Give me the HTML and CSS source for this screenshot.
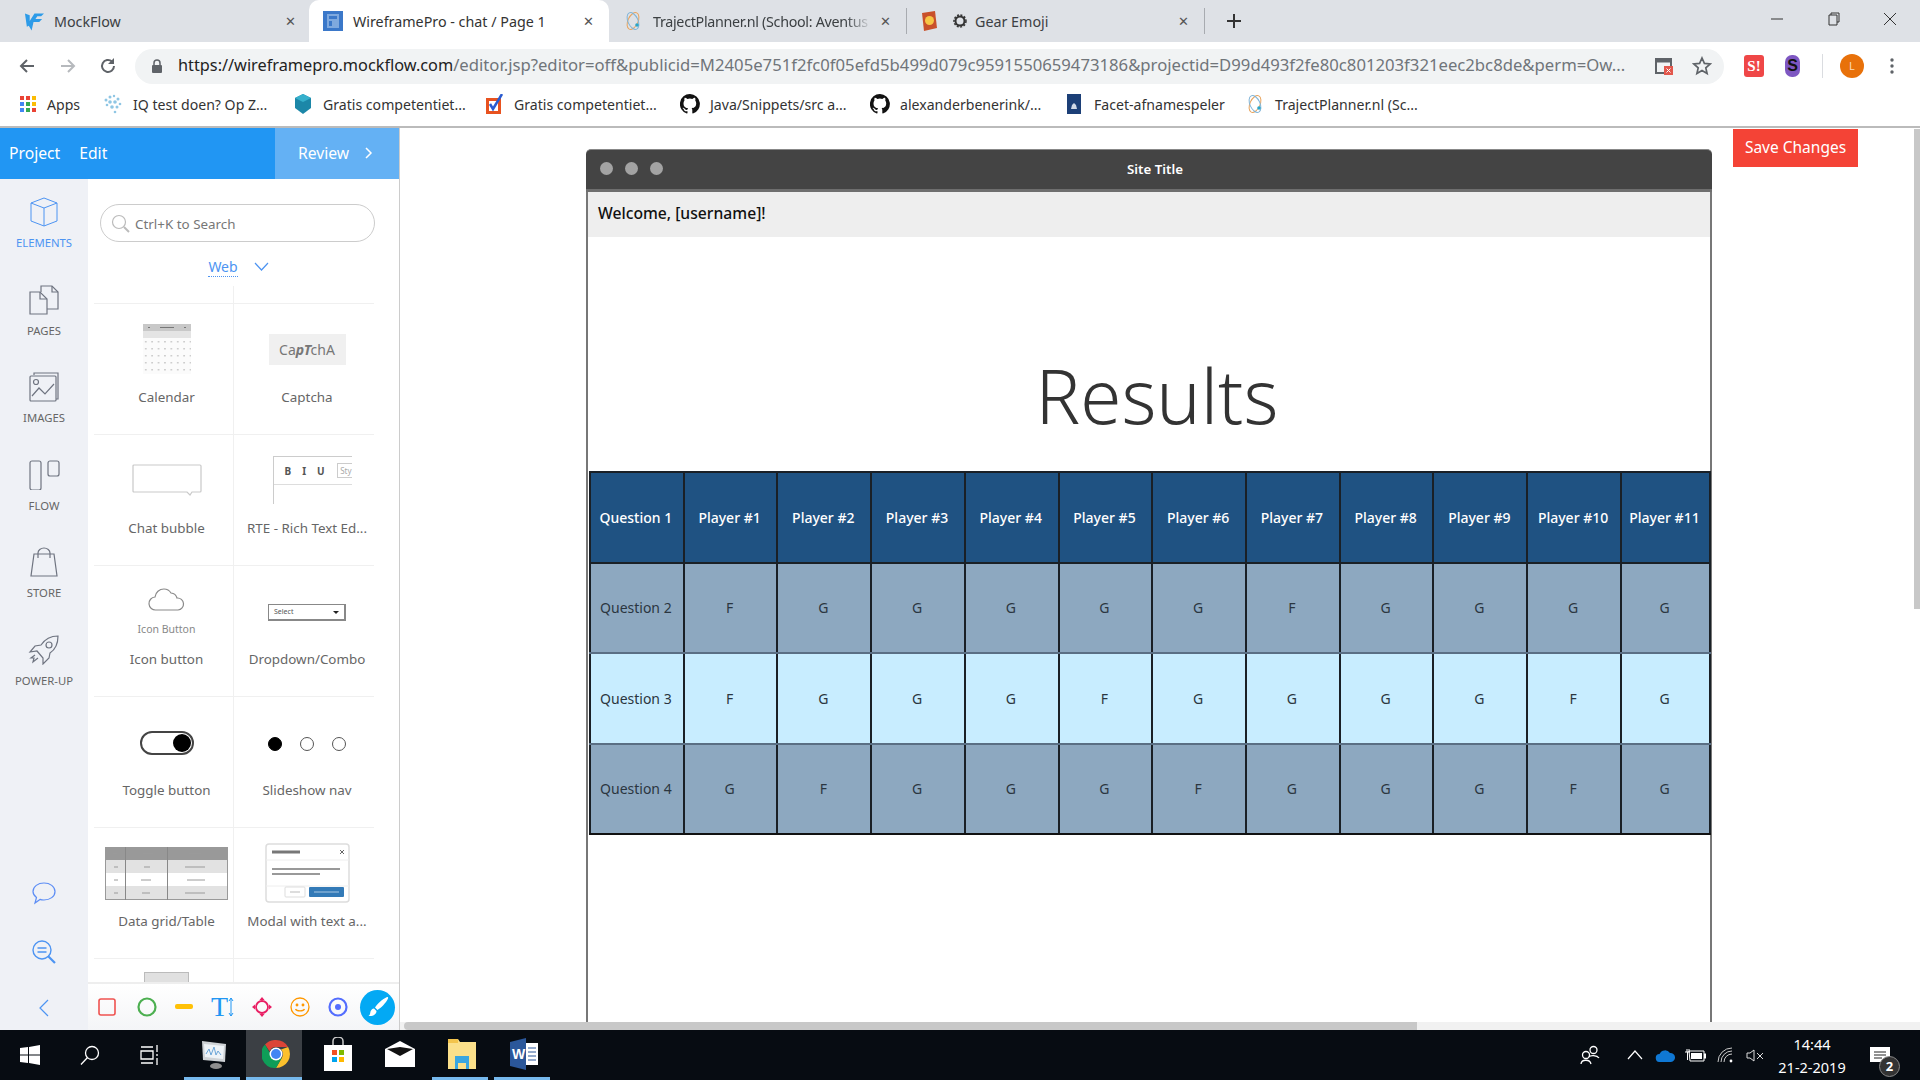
FILE: index.html
```html
<!DOCTYPE html>
<html lang="en">
<head>
  <meta charset="UTF-8">
  <title>WireframePro - chat / Page 1</title>
  <link rel="stylesheet" href="styles.css">
</head>
<body>

<svg class="defs" width="0" height="0">
  <symbol id="github" viewBox="0 0 20 20">
    <path fill="#111" d="M10 0a10 10 0 0 0-3.2 19.5c.5.1.7-.2.7-.5v-1.8c-2.8.6-3.4-1.3-3.4-1.3-.5-1.2-1.1-1.5-1.1-1.5-.9-.6.1-.6.1-.6 1 .1 1.5 1 1.5 1 .9 1.5 2.3 1.1 2.9.8.1-.6.3-1.100.6-1.300-2.200-.3-4.600-1.100-4.600-5 0-1.100.4-2 1-2.700-.1-.3-.4-1.300.1-2.700 0 0 .8-.3 2.800 1a9.600 9.600 0 0 1 5 0c1.900-1.300 2.700-1 2.700-1 .6 1.400.2 2.400.1 2.700.6.700 1 1.600 1 2.700 0 3.900-2.300 4.700-4.600 5 .4.300.7.900.7 1.900V19c0 .3.200.6.700.5A10 10 0 0 0 10 0z"/>
  </symbol>
  <symbol id="orbit" viewBox="0 0 20 20">
    <ellipse cx="10" cy="10" rx="5" ry="9" fill="none" stroke="#e8a35c" stroke-width="1" transform="rotate(25 10 10)"/>
    <ellipse cx="10" cy="10" rx="5" ry="9" fill="none" stroke="#7fb4d8" stroke-width="1" transform="rotate(-25 10 10)"/>
    <circle cx="14" cy="14" r="1.800" fill="#2aa6c9"/>
  </symbol>
</svg>

<!-- Browser tabs -->
<div class="tabbar">
  <div class="tab tab-first">
    <svg class="tab-icon" viewBox="0 0 21 20"><path fill="#2d9be8" d="M1 2l5 2v6l5-8h10l-3 3h-4l-2 3h7l-3 3h-6l-2 9-3-5-2 1z"/></svg>
    <span class="tab-title">MockFlow</span>
    <span class="tab-close">&#10005;</span>
  </div>
  <div class="tab tab-active">
    <svg class="tab-icon" viewBox="0 0 20 20"><rect width="20" height="20" fill="#3b78c9"/><rect x="4" y="3" width="12" height="14" fill="#7fa9de"/><rect x="6" y="5" width="8" height="3" fill="#3b78c9"/><rect x="6" y="10" width="3" height="5" fill="#3b78c9"/></svg>
    <span class="tab-title">WireframePro - chat / Page 1</span>
    <span class="tab-close">&#10005;</span>
  </div>
  <div class="tab tab-sep">
    <svg class="tab-icon"><use href="#orbit"/></svg>
    <span class="tab-title tab-fade">TrajectPlanner.nl (School: Aventus</span>
    <span class="tab-close">&#10005;</span>
  </div>
  <div class="tab tab-sep">
    <svg class="tab-icon tab-icon-book" viewBox="0 0 16 20"><path fill="#c9502a" d="M1 2l13-2 2 17-13 3z"/><circle cx="8.500" cy="9.500" r="4.500" fill="#f7c545"/></svg>
    <svg class="tab-icon tab-icon-gear" viewBox="0 0 14 14"><circle cx="7" cy="7" r="4.500" fill="none" stroke="#333" stroke-width="2"/><circle cx="7" cy="7" r="6" fill="none" stroke="#333" stroke-width="1.500" stroke-dasharray="2 1.500"/></svg>
    <span class="tab-title">Gear Emoji</span>
    <span class="tab-close">&#10005;</span>
  </div>
  <div class="tab-new">
    <svg width="16" height="16" viewBox="0 0 16 16"><path d="M8 1v14M1 8h14" stroke="#333" stroke-width="2"/></svg>
  </div>
  <div class="win-controls">
    <svg width="14" height="14" viewBox="0 0 14 14"><path d="M1 7h12" stroke="#333"/></svg>
    <svg width="14" height="14" viewBox="0 0 14 14"><path d="M4 3V1h8v9h-2M2 3h8v10H2z" fill="none" stroke="#333"/></svg>
    <svg width="14" height="14" viewBox="0 0 14 14"><path d="M1 1l12 12M13 1L1 13" stroke="#333"/></svg>
  </div>
</div>

<!-- Address bar -->
<div class="toolbar">
  <div class="nav-buttons">
    <svg width="18" height="18" viewBox="0 0 18 18"><path d="M16 9H3M9 3L3 9l6 6" fill="none" stroke="#5f6368" stroke-width="2"/></svg>
    <svg width="18" height="18" viewBox="0 0 18 18"><path d="M2 9h13M9 3l6 6-6 6" fill="none" stroke="#b6b9bd" stroke-width="2"/></svg>
    <svg width="18" height="18" viewBox="0 0 18 18"><path d="M15 9a6 6 0 1 1-2-4.500" fill="none" stroke="#5f6368" stroke-width="2"/><path d="M15 1v6H9z" fill="#5f6368"/></svg>
  </div>
  <div class="omnibox">
    <svg class="lock" width="12" height="14" viewBox="0 0 12 14"><path d="M3 6V4a3 3 0 0 1 6 0v2" fill="none" stroke="#5f6368" stroke-width="1.500"/><rect x="1" y="6" width="10" height="8" rx="1" fill="#5f6368"/></svg>
    <div class="url"><span class="url-host">https://wireframepro.mockflow.com</span>/editor.jsp?editor=off&amp;publicid=M2405e751f2fc0f05efd5b499d079c9591550659473186&amp;projectid=D99d493f2fe80c801203f321eec2bc8de&amp;perm=Ow...</div>
    <svg class="omni-icon" width="18" height="18" viewBox="0 0 18 18"><rect x="1" y="2" width="15" height="14" fill="none" stroke="#5f6368" stroke-width="2"/><path d="M1 4h15" stroke="#5f6368" stroke-width="3"/><rect x="9" y="9" width="9" height="9" fill="#e2574c"/><path d="M11.500 11.500l4 4m0-4l-4 4" stroke="#fff"/></svg>
    <svg class="omni-icon omni-star" width="20" height="20" viewBox="0 0 20 20"><path d="M10 2l2.400 5.400 5.800.6-4.400 3.900 1.300 5.700L10 14.600l-5.100 3 1.300-5.700L1.800 8l5.800-.6z" fill="none" stroke="#5f6368" stroke-width="1.700"/></svg>
  </div>
  <div class="ext-buttons">
    <span class="ext-s">S!</span>
    <span class="ext-purple">S</span>
    <span class="ext-sep"></span>
    <span class="avatar">L</span>
    <svg width="4" height="18" viewBox="0 0 4 18"><circle cx="2" cy="3" r="1.700" fill="#5f6368"/><circle cx="2" cy="9" r="1.700" fill="#5f6368"/><circle cx="2" cy="15" r="1.700" fill="#5f6368"/></svg>
  </div>
</div>

<!-- Bookmarks -->
<div class="bookmarks">
  <div class="bm bm-apps">
    <svg class="bm-icon-apps" width="16" height="16" viewBox="0 0 16 16">
      <rect width="4" height="4" fill="#ea4335"/><rect x="6" width="4" height="4" fill="#ea4335"/><rect x="12" width="4" height="4" fill="#fbbc05"/>
      <rect y="6" width="4" height="4" fill="#4285f4"/><rect x="6" y="6" width="4" height="4" fill="#34a853"/><rect x="12" y="6" width="4" height="4" fill="#fbbc05"/>
      <rect y="12" width="4" height="4" fill="#4285f4"/><rect x="6" y="12" width="4" height="4" fill="#34a853"/><rect x="12" y="12" width="4" height="4" fill="#ea4335"/>
    </svg>
    Apps
  </div>
  <div class="bm bm-iq">
    <svg width="20" height="20" viewBox="0 0 20 20" fill="#8fc6e4"><circle cx="3" cy="6" r="1.500"/><circle cx="7" cy="3" r="1.500"/><circle cx="11" cy="2" r="1.200"/><circle cx="15" cy="5" r="1.500"/><circle cx="7" cy="8" r="1.800"/><circle cx="12" cy="8" r="1.800"/><circle cx="17" cy="10" r="1.300"/><circle cx="4" cy="11" r="1.300"/><circle cx="9" cy="13" r="1.800"/><circle cx="14" cy="13" r="1.500"/><circle cx="12" cy="18" r="1.300"/></svg>
    IQ test doen? Op Z...
  </div>
  <div class="bm bm-cube">
    <svg width="20" height="20" viewBox="0 0 20 20"><path d="M10 0l8 4v10l-8 6-8-6V4z" fill="#1c87a8"/><path d="M10 0l8 4-8 4-8-4z" fill="#36b0cc"/></svg>
    Gratis competentiet...
  </div>
  <div class="bm bm-check">
    <svg width="18" height="20" viewBox="0 0 18 20"><rect y="4" width="15" height="16" fill="#e8521f"/><rect x="3" y="7" width="9" height="10" fill="#fff"/><path d="M4 10l3 5 9-15" fill="none" stroke="#2a5bd0" stroke-width="2.500"/></svg>
    Gratis competentiet...
  </div>
  <div class="bm bm-git1">
    <svg width="20" height="20"><use href="#github"/></svg>
    Java/Snippets/src a...
  </div>
  <div class="bm bm-git2">
    <svg width="20" height="20"><use href="#github"/></svg>
    alexanderbenerink/...
  </div>
  <div class="bm bm-facet">
    <svg width="14" height="20" viewBox="0 0 14 20"><rect width="14" height="20" fill="#1c3f77"/><path d="M4 15l1-4 2-2 2 2 1 4z" fill="#cfd8e6"/></svg>
    Facet-afnamespeler
  </div>
  <div class="bm bm-tp">
    <svg width="20" height="20"><use href="#orbit"/></svg>
    TrajectPlanner.nl (Sc...
  </div>
</div>

<!-- Editor -->
<div class="editor">

  <aside class="sidebar">
    <div class="side-head">
      <div class="side-menu"><span>Project</span><span>Edit</span></div>
      <div class="side-review">Review
        <svg width="8" height="12" viewBox="0 0 8 12"><path d="M1 1l5 5-5 5" fill="none" stroke="#fff" stroke-width="1.500"/></svg>
      </div>
    </div>

    <div class="side-body">
      <nav class="rail">
        <div class="rail-item rail-active">
          <svg width="30" height="30" viewBox="0 0 30 30" fill="none" stroke="#4d94f2"><path d="M15 1l13 5v18l-13 5-13-5V6z M2 6l13 5 13-5 M15 11v18"/></svg>
          ELEMENTS
        </div>
        <div class="rail-item">
          <svg width="32" height="30" viewBox="0 0 32 30" fill="none" stroke="#6f7480" stroke-width="1.200"><path d="M13 7V1h11l6 6v17h-11"/><path d="M24 1v6h6"/><path d="M2 7h10l7 7v15H2z"/><path d="M12 7v7h7"/></svg>
          PAGES
        </div>
        <div class="rail-item">
          <svg width="32" height="30" viewBox="0 0 32 30" fill="none" stroke="#6f7480" stroke-width="1.200"><path d="M6 3V1h24v26h-2"/><rect x="2" y="4" width="26" height="25" rx="1"/><circle cx="8" cy="10" r="2.500"/><path d="M4 24l7-8 6 6 9-10"/></svg>
          IMAGES
        </div>
        <div class="rail-item">
          <svg width="32" height="30" viewBox="0 0 32 30" fill="none" stroke="#6f7480" stroke-width="1.200"><rect x="2" y="1" width="11" height="29" rx="2"/><rect x="20" y="1" width="11" height="15" rx="2"/></svg>
          FLOW
        </div>
        <div class="rail-item">
          <svg width="30" height="30" viewBox="0 0 30 30" fill="none" stroke="#6f7480" stroke-width="1.200"><path d="M5 7h20l3 22H2z"/><path d="M9 11V6a6 5 0 0 1 12 0v5"/></svg>
          STORE
        </div>
        <div class="rail-item">
          <svg width="32" height="30" viewBox="0 0 32 30" fill="none" stroke="#6f7480" stroke-width="1.200"><path d="M30 1c-8 0-13 3-17 9l-6 1-5 6 7-1 6 7 0 6 6-6 1-5c6-4 8-10 8-17z"/><circle cx="21" cy="10" r="3"/><path d="M7 20l-4 3 3 0-1 4 5-4"/></svg>
          POWER-UP
        </div>
        <div class="rail-bottom">
          <svg width="24" height="24" viewBox="0 0 24 24" fill="none" stroke="#5c8df5" stroke-width="1.200"><path d="M12 2c6 0 11 3.500 11 8.500S18 19 12 19c-1.500 0-3-.2-4-.6L3 22l1.500-5.500C2.500 15 1 13 1 10.500 1 5.500 6 2 12 2z"/></svg>
          <svg width="24" height="24" viewBox="0 0 24 24" fill="none" stroke="#4d94f2" stroke-width="1.400"><circle cx="10" cy="10" r="9"/><path d="M5.500 8h9M5.500 12h9"/><path d="M16 16l7 7" stroke-width="2.200"/></svg>
          <svg width="12" height="18" viewBox="0 0 12 18" fill="none" stroke="#4d94f2" stroke-width="1.200"><path d="M10 1L2 9l8 8"/></svg>
        </div>
      </nav>

      <div class="panel">
        <div class="search">
          <svg width="19" height="19" viewBox="0 0 19 19" fill="none" stroke="#bbb" stroke-width="1.200"><circle cx="8" cy="8" r="6.500"/><path d="M13 13l5 5" stroke-width="2"/></svg>
          Ctrl+K to Search
        </div>
        <div class="category">
          <span class="category-name">Web</span>
          <svg width="15" height="9" viewBox="0 0 15 9" fill="none" stroke="#4d94f2" stroke-width="1.200"><path d="M1 1l6.500 7L14 1"/></svg>
        </div>

        <div class="el-scroll">
          <div class="el-top"></div>
          <div class="el-grid">

            <div class="el-cell">
              <div class="el-thumb">
                <svg width="48" height="50" viewBox="0 0 48 50">
                  <defs><pattern id="calDots" width="6.400" height="7" patternUnits="userSpaceOnUse"><rect x="2" y="3" width="1.500" height="1.500" fill="#c4c4c4"/></pattern></defs>
                  <rect width="48" height="50" fill="#fbfbfb"/>
                  <rect width="48" height="7" fill="#c8c8c8"/>
                  <path d="M17 3.500h14M5 3.500h2M41 3.500h2" stroke="#777"/>
                  <rect y="7" width="48" height="7" fill="#e4e4e4"/>
                  <rect y="14" width="48" height="36" fill="url(#calDots)"/>
                </svg>
              </div>
              <div class="el-label">Calendar</div>
            </div>

            <div class="el-cell">
              <div class="el-thumb"><div class="thumb-captcha">Ca<b>pT</b>chA</div></div>
              <div class="el-label">Captcha</div>
            </div>

            <div class="el-cell">
              <div class="el-thumb">
                <svg width="70" height="32" viewBox="0 0 70 32" fill="#fff" stroke="#c9c9c9" stroke-width="1.200"><path d="M2 1h66q1 0 1 1v25q0 1-1 1H60l-2 3-3-3H2q-1 0-1-1V2q0-1 1-1z"/></svg>
              </div>
              <div class="el-label">Chat bubble</div>
            </div>

            <div class="el-cell">
              <div class="el-thumb">
                <div class="thumb-rte">
                  <div class="rte-bar"><b>B</b><b>I</b><b>U</b><span>Sty</span></div>
                </div>
              </div>
              <div class="el-label">RTE - Rich Text Ed...</div>
            </div>

            <div class="el-cell">
              <div class="el-thumb thumb-iconbtn">
                <svg width="37" height="24" viewBox="0 0 37 24" fill="none" stroke="#8a8a8a" stroke-width="1.200"><path d="M8 23a6.500 6.500 0 0 1-1-13A9 9 0 0 1 16 2c3 0 5.500 1.500 7 4a7 7 0 0 1 6 5 6 6 0 0 1 1 12z"/></svg>
                <span>Icon Button</span>
              </div>
              <div class="el-label">Icon button</div>
            </div>

            <div class="el-cell">
              <div class="el-thumb"><div class="thumb-select">Select</div></div>
              <div class="el-label">Dropdown/Combo</div>
            </div>

            <div class="el-cell">
              <div class="el-thumb"><div class="thumb-toggle"></div></div>
              <div class="el-label">Toggle button</div>
            </div>

            <div class="el-cell">
              <div class="el-thumb"><div class="thumb-dots"><i class="dot-on"></i><i></i><i></i></div></div>
              <div class="el-label">Slideshow nav</div>
            </div>

            <div class="el-cell">
              <div class="el-thumb">
                <svg width="123" height="53" viewBox="0 0 123 53">
                  <rect width="123" height="13" fill="#999"/>
                  <rect y="13" width="123" height="13" fill="#e2e2e2"/>
                  <rect y="26" width="123" height="13" fill="#fff"/>
                  <rect y="39" width="123" height="14" fill="#e2e2e2"/>
                  <rect x=".5" y=".5" width="122" height="52" fill="none" stroke="#999"/>
                  <path d="M20.500 0v53M62.500 0v53" stroke="#888"/>
                  <path d="M8 7h4M38 7h10M84 7h12M9 20h4M39 20h6M80 20h20M9 33h4M36 33h10M82 33h18M9 46h4M37 46h8M80 46h20" stroke="#9a9a9a"/>
                </svg>
              </div>
              <div class="el-label">Data grid/Table</div>
            </div>

            <div class="el-cell">
              <div class="el-thumb">
                <svg width="85" height="60" viewBox="0 0 85 60">
                  <rect x="1" y="1" width="83" height="58" rx="3" fill="#fff" stroke="#ddd" stroke-width="1.500"/>
                  <path d="M7 9h28" stroke="#777" stroke-width="3"/>
                  <path d="M75 7l4 4m0-4l-4 4" stroke="#666"/>
                  <path d="M1 17h83M1 43h83" stroke="#eee"/>
                  <path d="M7 26h68M7 31h48" stroke="#999" stroke-width="2"/>
                  <rect x="20" y="44" width="20" height="10" rx="1" fill="#fff" stroke="#ddd"/>
                  <rect x="44" y="44" width="35" height="10" rx="1" fill="#337ab7"/>
                  <path d="M25 49h10" stroke="#bbb"/>
                  <path d="M49 49h25" stroke="#a9c8e4"/>
                </svg>
              </div>
              <div class="el-label">Modal with text a...</div>
            </div>

            <div class="el-cell">
              <div class="el-thumb thumb-peek"><div class="peek-box"></div></div>
            </div>
            <div class="el-cell"></div>

          </div>
        </div>

        <div class="tools">
          <svg width="18" height="18" viewBox="0 0 18 18"><rect x="1" y="1" width="16" height="16" rx="2" fill="none" stroke="#ef5350" stroke-width="1.600"/></svg>
          <svg width="20" height="20" viewBox="0 0 20 20"><circle cx="10" cy="10" r="8.500" fill="none" stroke="#4caf50" stroke-width="2.200"/></svg>
          <svg width="18" height="6" viewBox="0 0 18 6"><rect width="18" height="5" rx="2" fill="#ffc107"/></svg>
          <span class="tool-text">T<svg width="6" height="20" viewBox="0 0 6 20"><path d="M3 1v18M1 4l2-3 2 3M1 16l2 3 2-3" fill="none" stroke="#2196f3"/></svg></span>
          <svg width="20" height="20" viewBox="0 0 20 20"><circle cx="10" cy="10" r="6" fill="none" stroke="#e91e63" stroke-width="1.800"/><path d="M10 0l2.500 3h-5zM10 20l2.500-3h-5zM0 10l3-2.500v5zM20 10l-3-2.500v5z" fill="#e91e63"/></svg>
          <svg width="20" height="20" viewBox="0 0 20 20" fill="none" stroke="#ff9800" stroke-width="1.300"><circle cx="10" cy="10" r="9"/><path d="M5.500 12c1 2.500 8 2.500 9 0"/><circle cx="7" cy="8" r=".8" fill="#ff9800"/><circle cx="13" cy="8" r=".8" fill="#ff9800"/></svg>
          <svg width="20" height="20" viewBox="0 0 20 20"><circle cx="10" cy="10" r="8.500" fill="none" stroke="#536dfe" stroke-width="2.200"/><circle cx="10" cy="10" r="3" fill="#536dfe"/></svg>
          <div class="tool-brush">
            <svg width="22" height="22" viewBox="0 0 22 22"><path d="M20 1c1 0 1.500 .5 1 1.500C19 7 14 12 10.500 14L8 11.500C10 8 15.500 3 20 1z" fill="#fff"/><path d="M7 12.500l2.500 2.500c0 3-3 5.500-8 5 2-1.500 1.500-3 2-4.500.5-1.500 1.800-2.800 3.500-3z" fill="#fff"/></svg>
          </div>
        </div>
      </div>
    </div>
  </aside>

  <main class="canvas">
    <div class="canvas-view">
      <div class="mock-window">
        <div class="mock-title">
          <div class="mock-dots"><i></i><i></i><i></i></div>
          Site Title
        </div>
        <div class="mock-body">
          <div class="welcome">Welcome, [username]!</div>
          <h1 class="results-title">Results</h1>
          <table class="results">
            <colgroup><col><col><col><col><col><col><col><col><col><col><col><col class="col-last"></colgroup>
            <tr class="row-head"><th>Question 1</th><th>Player #1</th><th>Player #2</th><th>Player #3</th><th>Player #4</th><th>Player #5</th><th>Player #6</th><th>Player #7</th><th>Player #8</th><th>Player #9</th><th>Player #10</th><th>Player #11</th></tr>
            <tr class="row-dark"><td>Question 2</td><td>F</td><td>G</td><td>G</td><td>G</td><td>G</td><td>G</td><td>F</td><td>G</td><td>G</td><td>G</td><td>G</td></tr>
            <tr class="row-light"><td>Question 3</td><td>F</td><td>G</td><td>G</td><td>G</td><td>F</td><td>G</td><td>G</td><td>G</td><td>G</td><td>F</td><td>G</td></tr>
            <tr class="row-dark"><td>Question 4</td><td>G</td><td>F</td><td>G</td><td>G</td><td>G</td><td>F</td><td>G</td><td>G</td><td>G</td><td>F</td><td>G</td></tr>
          </table>
        </div>
      </div>
    </div>
    <div class="hscroll"><div class="hscroll-thumb"></div></div>
    <button class="save-btn">Save Changes</button>
    <div class="vscroll-thumb"></div>
  </main>
</div>

<!-- Windows taskbar -->
<footer class="taskbar">
  <div class="task-slot">
    <svg width="20" height="20" viewBox="0 0 20 20" fill="#fff"><path d="M0 3l8-1v7.500H0zM9 2l11-2v9.500H9zM0 10.500h8V18l-8-1zM9 10.500h11V20L9 18z"/></svg>
  </div>
  <div class="task-slot">
    <svg width="20" height="20" viewBox="0 0 20 20" fill="none" stroke="#fff" stroke-width="1.300"><circle cx="12" cy="8" r="6.500"/><path d="M7.500 12.500L1 19.500"/></svg>
  </div>
  <div class="task-slot">
    <svg width="20" height="20" viewBox="0 0 20 20" fill="none" stroke="#fff" stroke-width="1.300"><path d="M1 2h12M1 18h12M1 6h12v8H1zM17 0v7M17 9v2M17 13v7"/></svg>
  </div>
  <div class="task-app task-app-first task-open">
    <svg width="28" height="32" viewBox="0 0 28 32"><path d="M2 3l24 3-1 18-22-2z" fill="#cfd3d6"/><path d="M4 6l20 2-1 13-18-2z" fill="#eef3f7"/><path d="M6 16l3-5 2 6 3-8 2 8 2-4 3 4" fill="none" stroke="#6aa5d8"/><ellipse cx="16" cy="28" rx="6" ry="3" fill="#8e8e8e"/></svg>
  </div>
  <div class="task-app task-active task-open">
    <svg width="28" height="28" viewBox="0 0 28 28">
      <path d="M14 0a14 14 0 0 1 12.100 7H14a7 7 0 0 0-6.500 4.300L3 4.500A14 14 0 0 1 14 0z" fill="#db4437"/>
      <path d="M26.100 7A14 14 0 0 1 14 28l6-10.500A7 7 0 0 0 19 9.500z" fill="#fbc02d"/>
      <path d="M3 4.500l6 10.500a7 7 0 0 0 11 2.500L14 28A14 14 0 0 1 3 4.500z" fill="#0f9d58"/>
      <circle cx="14" cy="14" r="6.500" fill="#fff"/><circle cx="14" cy="14" r="5" fill="#4285f4"/>
    </svg>
  </div>
  <div class="task-app">
    <svg width="28" height="34" viewBox="0 0 28 34"><path d="M9 8V4a5 4 0 0 1 10 0v4" fill="none" stroke="#ccc" stroke-width="1.500"/><rect y="8" width="28" height="26" fill="#fff"/><rect x="8" y="13" width="5" height="5" fill="#f25022"/><rect x="15" y="13" width="5" height="5" fill="#7fba00"/><rect x="8" y="20" width="5" height="5" fill="#00a4ef"/><rect x="15" y="20" width="5" height="5" fill="#ffb900"/></svg>
  </div>
  <div class="task-app">
    <svg width="30" height="26" viewBox="0 0 30 26"><path d="M0 8L15 0l15 8v18H0z" fill="#fff"/><path d="M2 8l13 7 13-7-13-2z" fill="#111"/></svg>
  </div>
  <div class="task-app task-open">
    <svg width="28" height="30" viewBox="0 0 28 30"><path d="M0 0h10l2 3h16v27H0z" fill="#fbe08a"/><path d="M0 0h10v4H0z" fill="#f3c44c"/><path d="M7 17h14v13h-3v-6h-8v6H7z" fill="#3aa6e0"/></svg>
  </div>
  <div class="task-app task-open">
    <svg width="28" height="32" viewBox="0 0 28 32"><path d="M16 0v32L0 28V4z" fill="#2b579a"/><rect x="16" y="5" width="12" height="22" fill="#fff"/><path d="M18 10h8M18 14h8M18 18h8M18 22h8" stroke="#2b579a"/><text x="2" y="21" class="word-w">W</text></svg>
  </div>

  <div class="tray">
    <svg width="20" height="20" viewBox="0 0 20 20" fill="none" stroke="#fff" stroke-width="1.300"><circle cx="13.500" cy="5" r="3.500"/><path d="M9 12c1-2 8-2 10 1"/><circle cx="6" cy="10" r="3.500"/><path d="M1 19c.5-5 9-5 10 0"/></svg>
    <svg width="16" height="10" viewBox="0 0 16 10" fill="none" stroke="#fff" stroke-width="1.200"><path d="M1 9l7-8 7 8"/></svg>
    <svg width="21" height="14" viewBox="0 0 21 14"><path d="M5 14a4 4 0 0 1-.5-8A6 6 0 0 1 15 5a4.500 4.500 0 0 1 1 9z" fill="#0f78d4"/></svg>
    <svg width="21" height="13" viewBox="0 0 21 13" fill="none" stroke="#fff"><path d="M4 2h15v10H5z"/><path d="M19 5h2v4h-2" fill="#fff"/><rect x="6" y="4" width="11" height="6" fill="#fff" stroke="none"/><path d="M0 3h5M2 0v3M4 0v3M2.500 3v8"/></svg>
    <svg width="16" height="16" viewBox="0 0 16 16" fill="none" stroke="#ccc"><path d="M1 15A14 14 0 0 1 15 1M4 15A11 11 0 0 1 15 4M7 15a8 8 0 0 1 8-8"/><circle cx="14" cy="14" r="1.400" fill="#fff" stroke="none"/></svg>
    <svg width="18" height="13" viewBox="0 0 18 13" fill="none" stroke="#ddd"><path d="M1 4h3l4-3v11l-4-3H1zM11 4l6 6M17 4l-6 6"/></svg>
    <div class="clock"><span>14:44</span><span>21-2-2019</span></div>
    <div class="notify">
      <svg width="20" height="17" viewBox="0 0 20 17"><path d="M0 0h20v15h-6l-3 2v-2H0z" fill="#fff"/><path d="M4 5h12M4 8h12M4 11h8" stroke="#222"/></svg>
      <span class="notify-badge">2</span>
    </div>
  </div>
</footer>

</body>
</html>
```

FILE: styles.css
```css
* {
  box-sizing: border-box;
}
html, body {
  height: 100%;
}
body {
  margin: 0;
  width: 1920px;
  height: 1080px;
  overflow: hidden;
  display: flex;
  flex-direction: column;
  font-family: "Noto Sans", sans-serif;
  background: #fff;
  color: #333;
}
.defs {
  position: absolute;
}

/* Tabs */
.tabbar {
  height: 42px;
  flex: none;
  display: flex;
  align-items: stretch;
  background: #dee1e6;
}
.tab {
  width: 298px;
  display: flex;
  align-items: center;
  padding: 0 15px 0 14px;
  font-size: 14.300px;
  color: #3c4043;
}
.tab-first {
  width: 309px;
  padding-left: 24px;
  padding-right: 13px;
}
.tab-active {
  width: 300px;
  background: #fff;
  border-radius: 10px 10px 0 0;
  color: #333;
}
.tab-sep {
  border-right: 1px solid #a8abb0;
  height: 26px;
  margin-top: 8px;
}
.tab-icon {
  width: 20px;
  height: 20px;
  flex: none;
  margin-right: 10px;
}
.tab-icon-book {
  width: 16px;
  margin-right: 16px;
}
.tab-icon-gear {
  width: 14px;
  height: 14px;
  margin-right: 8px;
}
.tab-title {
  flex: 1;
  white-space: nowrap;
}
.tab-fade {
  letter-spacing: -.3px;
  -webkit-mask-image: linear-gradient(to right, #000 88%, transparent);
  mask-image: linear-gradient(to right, #000 88%, transparent);
}
.tab-close {
  font-size: 13px;
  color: #555;
  margin-left: 8px;
}
.tab-new {
  width: 58px;
  display: flex;
  align-items: center;
  justify-content: center;
}
.win-controls {
  margin-left: auto;
  width: 168px;
  display: flex;
  align-items: center;
  justify-content: space-between;
  padding: 0 23px 4px 18px;
}

/* Address bar */
.toolbar {
  height: 43px;
  flex: none;
  display: flex;
  align-items: center;
  background: #fff;
  padding-top: 5px;
}
.nav-buttons {
  width: 135px;
  display: flex;
  justify-content: space-between;
  padding: 0 18px;
}
.omnibox {
  width: 1589px;
  height: 35px;
  background: #f1f3f4;
  border-radius: 18px;
  display: flex;
  align-items: center;
  padding: 0 12px 0 16px;
}
.lock {
  margin-right: 15px;
  flex: none;
}
.url {
  flex: 1;
  font-size: 16.700px;
  line-height: 30px;
  padding-bottom: 2px;
  white-space: nowrap;
  overflow: hidden;
  color: #70757a;
}
.url-host {
  font-size: 16.300px;
  color: #222;
}
.omni-icon {
  flex: none;
  margin-left: 14px;
}
.omni-star {
  margin-left: 19px;
}
.ext-buttons {
  flex: 1;
  display: flex;
  align-items: center;
  padding-left: 20px;
  padding-right: 26px;
}
.ext-s {
  width: 20px;
  height: 22px;
  background: #ef4747;
  color: #fff;
  font: bold 15px "Liberation Serif", serif;
  text-align: center;
  line-height: 22px;
  border-radius: 3px;
}
.ext-purple {
  width: 15px;
  height: 22px;
  margin-left: 21px;
  background: #7e57c2;
  color: #111;
  font: bold 16px "Liberation Sans", sans-serif;
  text-align: center;
  line-height: 22px;
  border-radius: 7px;
}
.ext-sep {
  width: 1px;
  height: 24px;
  margin-left: 22px;
  background: #dadce0;
}
.avatar {
  width: 24px;
  height: 24px;
  margin-left: 17px;
  margin-right: auto;
  border-radius: 50%;
  background: #e8710a;
  color: #fbd7b5;
  font-size: 11px;
  text-align: center;
  line-height: 24px;
}

/* Bookmarks */
.bookmarks {
  height: 43px;
  flex: none;
  display: flex;
  align-items: center;
  padding-bottom: 3px;
  background: #fff;
  border-bottom: 2px solid #bbb;
  font-size: 14.100px;
  color: #333;
}
.bm {
  display: flex;
  align-items: center;
  gap: 10px;
  white-space: nowrap;
}
.bm-apps { width: 103px; padding-left: 20px; gap: 11px; }
.bm-iq { width: 190px; }
.bm-cube { width: 193px; }
.bm-check { width: 194px; }
.bm-git1 { width: 190px; }
.bm-git2 { width: 197px; }
.bm-facet { width: 178px; gap: 13px; }
.bm-tp { width: 180px; }

/* Editor */
.editor {
  flex: 1;
  min-height: 0;
  display: flex;
}
.sidebar {
  width: 400px;
  flex: none;
  display: flex;
  flex-direction: column;
  border-right: 1px solid #ccc;
}
.side-head {
  height: 51px;
  flex: none;
  display: flex;
  color: #fff;
  font-size: 15.700px;
  background: #2196f3;
}
.side-menu {
  width: 275px;
  display: flex;
  align-items: center;
  gap: 19px;
  padding: 0 0 2px 9px;
}
.side-review {
  flex: 1;
  background: #64b1f4;
  display: flex;
  align-items: center;
  gap: 16px;
  padding: 0 0 2px 23px;
}
.side-body {
  flex: 1;
  min-height: 0;
  display: flex;
}

/* Left rail */
.rail {
  width: 88px;
  flex: none;
  padding-top: 1px;
  background: #eff1f6;
  display: flex;
  flex-direction: column;
}
.rail-item {
  height: 87.500px;
  flex: none;
  display: flex;
  flex-direction: column;
  align-items: center;
  justify-content: center;
  gap: 9px;
  font-size: 11.300px;
  line-height: 14px;
  color: #666;
}
.rail-active {
  color: #4d94f2;
}
.rail-bottom {
  margin-top: auto;
  padding-bottom: 13px;
  display: flex;
  flex-direction: column;
  align-items: center;
  gap: 35px;
}

/* Element panel */
.panel {
  flex: 1;
  min-width: 0;
  display: flex;
  flex-direction: column;
  background: #fff;
}
.search {
  flex: none;
  margin: 25px 24px 0 12px;
  height: 38px;
  border: 1px solid #ccc;
  border-radius: 19px;
  display: flex;
  align-items: center;
  gap: 5px;
  padding: 1px 0 0 10px;
  font-size: 13.400px;
  color: #777;
}
.category {
  flex: none;
  height: 44px;
  padding-right: 10px;
  padding-top: 5px;
  display: flex;
  align-items: center;
  justify-content: center;
  gap: 16px;
  font-size: 14px;
  color: #4d94f2;
}
.category-name {
  border-bottom: 1px dotted #4d94f2;
  line-height: 19px;
}
.el-scroll {
  flex: 1;
  min-height: 0;
  overflow: hidden;
  padding: 0 25px 0 6px;
}
.el-top {
  height: 17px;
  width: 140px;
  border-right: 1px solid #f0f0f0;
}
.el-grid {
  display: grid;
  grid-template-columns: 140px 140px;
  grid-auto-rows: 131px;
  border-top: 1px solid #f0f0f0;
}
.el-cell {
  padding: 6px 0 0 6px;
  border-bottom: 1px solid #f0f0f0;
}
.el-cell:nth-child(odd) {
  border-right: 1px solid #f0f0f0;
}
.el-thumb {
  height: 78px;
  display: flex;
  flex-direction: column;
  align-items: center;
  justify-content: center;
}
.el-label {
  text-align: center;
  font-size: 13.400px;
  line-height: 18px;
  color: #666;
  white-space: nowrap;
}

/* Element thumbnails */
.thumb-captcha {
  width: 77px;
  height: 31px;
  background: #f0f0f0;
  color: #777;
  font-size: 14px;
  line-height: 31px;
  text-align: center;
}
.thumb-captcha b {
  font-style: italic;
  letter-spacing: -.5px;
}
.thumb-rte {
  width: 79px;
  height: 48px;
  margin-left: 10px;
  border-left: 1px solid #ccc;
  border-top: 1px solid #ccc;
}
.rte-bar {
  height: 28px;
  border-bottom: 1px solid #ddd;
  display: flex;
  align-items: center;
  gap: 11px;
  padding-left: 11px;
  font-size: 10px;
  color: #555;
}
.rte-bar span {
  border: 1px solid #ccc;
  border-right: 0;
  font-size: 8px;
  padding: 1px 0 1px 2px;
  margin-left: auto;
  color: #aaa;
}
.thumb-iconbtn {
  gap: 11px;
  padding-top: 1px;
}
.thumb-iconbtn span {
  font-size: 10.500px;
  line-height: 14px;
  color: #888;
}
.thumb-select {
  width: 78px;
  height: 17px;
  margin-top: 2px;
  border: 1px solid #888;
  border-width: 1px 2px 2px 1px;
  font-size: 7px;
  line-height: 14px;
  padding-left: 5px;
  color: #555;
  position: relative;
}
.thumb-select::after {
  content: "";
  position: absolute;
  right: 5px;
  top: 6px;
  border: 3px solid transparent;
  border-top-color: #222;
}
.thumb-toggle {
  width: 54px;
  height: 24px;
  margin-top: 2px;
  border: 2px solid #444;
  border-radius: 12px;
  background: #fff;
  display: flex;
  justify-content: flex-end;
  padding: 1px;
}
.thumb-toggle::after {
  content: "";
  width: 18px;
  height: 18px;
  border-radius: 50%;
  background: #000;
}
.thumb-dots {
  display: flex;
  gap: 18px;
  margin-top: 3px;
}
.thumb-dots i {
  width: 14px;
  height: 14px;
  border-radius: 50%;
  border: 1px solid #555;
}
.thumb-dots .dot-on {
  background: #000;
  border-color: #000;
}
.thumb-peek {
  justify-content: flex-start;
  padding-top: 7px;
}
.peek-box {
  width: 45px;
  height: 12px;
  background: #e0e0e0;
  border: 1px solid #bbb;
}

/* Bottom tool strip */
.tools {
  height: 48px;
  flex: none;
  display: grid;
  grid-template-columns: 39px 38px 36px 41px 38px 38px 32px 35px;
  align-items: center;
  padding-left: 10px;
  background: linear-gradient(#fff, #f4f5f7);
  border-top: 2px solid #eee;
  z-index: 1;
}
.tool-text {
  display: flex;
  align-items: center;
  font: 28px "Liberation Serif", serif;
  line-height: 24px;
  color: #2196f3;
}
.tool-brush {
  width: 35px;
  height: 35px;
  border-radius: 50%;
  background: #03a9f4;
  display: flex;
  align-items: center;
  justify-content: center;
}

/* Canvas */
.canvas {
  flex: 1;
  min-width: 0;
  position: relative;
  display: flex;
  flex-direction: column;
  background: #fff;
}
.canvas-view {
  flex: 1;
  min-height: 0;
  overflow: hidden;
  padding: 21px 0 0 186px;
}
.mock-window {
  width: 1126px;
  height: 900px;
}
.mock-title {
  height: 43px;
  background: #444;
  border-top: 1px solid #888;
  border-bottom: 3px solid #6e6e6e;
  border-radius: 5px 5px 0 0;
  display: flex;
  align-items: center;
  justify-content: center;
  padding: 0 0 2px 12px;
  color: #fff;
  font-size: 13.300px;
  font-weight: 600;
  position: relative;
}
.mock-dots {
  position: absolute;
  left: 14px;
  top: 12px;
  display: flex;
  gap: 12px;
}
.mock-dots i {
  width: 13px;
  height: 13px;
  border-radius: 50%;
  background: #a3a3a3;
}
.mock-body {
  height: 100%;
  border-left: 2px solid #777;
  border-right: 2px solid #777;
}
.welcome {
  height: 45px;
  background: #eee;
  padding-left: 10px;
  line-height: 43px;
  font-size: 15.700px;
  font-weight: 500;
  color: #111;
}
.results-title {
  margin: 0;
  height: 234px;
  text-align: center;
  padding: 108px 0 0 16px;
  font-size: 74.500px;
  line-height: 100px;
  font-weight: 350;
  color: #333;
}
.results {
  width: 1122px;
  margin-left: 1px;
  table-layout: fixed;
  border-collapse: collapse;
  font-size: 14px;
  text-align: center;
}
.col-last {
  width: 89px;
}
.results th, .results td {
  height: 90.500px;
  padding: 0 2px 0 0;
  border: 2px solid #1a2026;
}
.results th {
  background: #1f5282;
  color: #fff;
  font-weight: 500;
}
.results td {
  color: #2b3640;
}
.row-dark td {
  background: #8da8c0;
  border-top-color: #5a6f84;
  border-bottom-color: #5a6f84;
}
.row-light td {
  background: #c8edff;
  border-top-color: #5a6f84;
  border-bottom-color: #5a6f84;
}
.results tr:last-child td {
  border-bottom-color: #111;
}

/* Scroll bars */
.hscroll {
  height: 8px;
  flex: none;
  background: #f1f1f1;
}
.hscroll-thumb {
  width: 1013px;
  height: 8px;
  margin-left: 4px;
  background: #c8c8c8;
  border-radius: 4px 0 0 4px;
}
.vscroll-thumb {
  position: absolute;
  right: 0;
  top: 1px;
  width: 6px;
  height: 480px;
  background: #c8c8c8;
}
.save-btn {
  position: absolute;
  left: 1333px;
  top: 1px;
  width: 125px;
  height: 38px;
  border: 0;
  padding: 0 0 2px;
  background: #f44336;
  color: #fff;
  font: 15.500px "Noto Sans", sans-serif;
}

/* Taskbar */
.taskbar {
  height: 50px;
  flex: none;
  display: flex;
  align-items: stretch;
  background: #070c12;
  color: #fff;
}
.task-slot {
  width: 60px;
  display: flex;
  align-items: center;
  justify-content: center;
}
.task-app {
  width: 56px;
  margin-right: 6px;
  padding-left: 3px;
  display: flex;
  align-items: center;
  justify-content: center;
  border-bottom: 3px solid transparent;
}
.task-app-first {
  margin-left: 4px;
}
.task-open {
  border-bottom-color: #76b9ed;
}
.task-active {
  background: #3b3f44;
}
.word-w {
  font: bold 14px "Liberation Sans", sans-serif;
  fill: #fff;
}
.tray {
  margin-left: auto;
  display: grid;
  grid-template-columns: 60px repeat(5, 30px) 84px 36px;
  justify-items: center;
  align-items: center;
  padding-right: 30px;
}
.clock {
  display: flex;
  flex-direction: column;
  align-items: center;
  gap: 3px;
  font-size: 14.500px;
  line-height: 20px;
}
.notify {
  position: relative;
  justify-self: end;
  display: flex;
}
.notify-badge {
  position: absolute;
  left: 9px;
  top: 9px;
  width: 21px;
  height: 21px;
  border-radius: 50%;
  background: #333;
  border: 1px solid #888;
  font-size: 13px;
  font-weight: 700;
  text-align: center;
  line-height: 19px;
}
```
